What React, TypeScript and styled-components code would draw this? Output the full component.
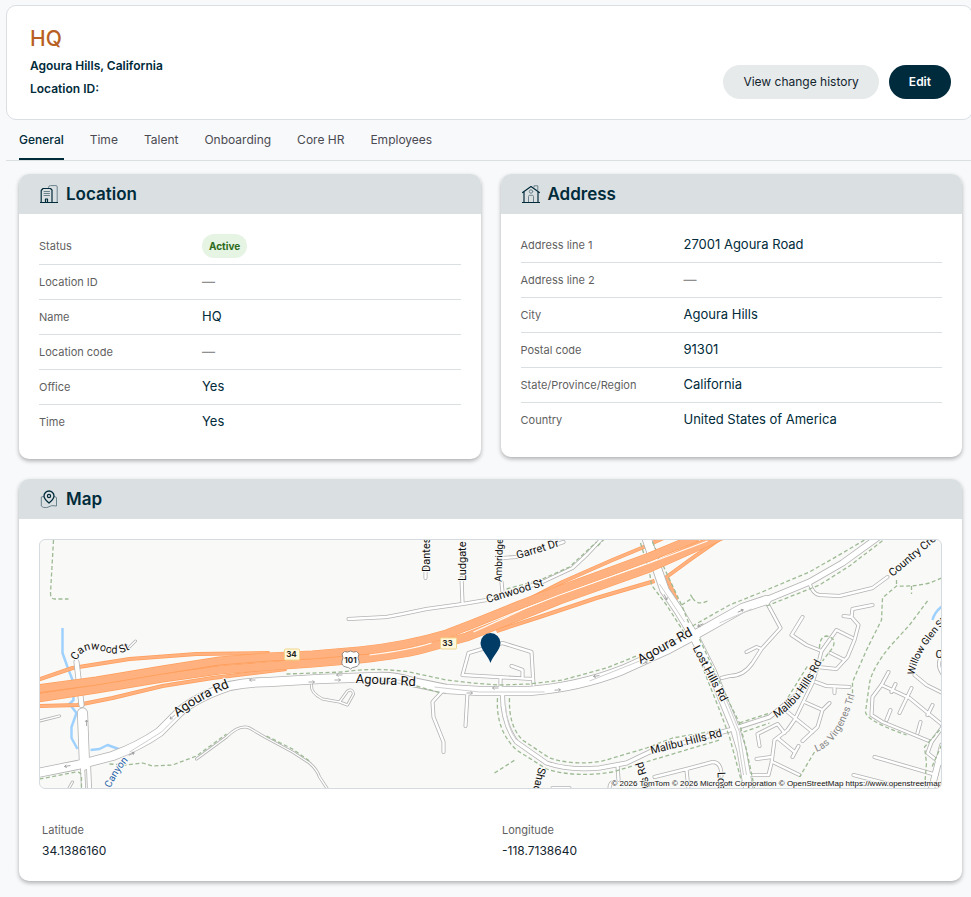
import React, { useState } from "react";
import styled, { createGlobalStyle, css } from "styled-components";

const GlobalStyle = createGlobalStyle`
  * { box-sizing: border-box; }
  body {
    margin: 0;
    background: #f8f9fb;
    color: #002b3a;
    font-family: Inter, "Liberation Sans", sans-serif;
    font-size: 12px;
    overflow-x: hidden;
  }
  h1, h2, p, dl, dd { margin: 0; }
`;

const Page = styled.div`
  padding: 5px 0 16px 6px;
`;

const HeaderCard = styled.header`
  display: flex;
  justify-content: space-between;
  align-items: flex-end;
  margin-right: -2px;
  padding: 20px 21px 19px 23px;
  background: #fff;
  border: 1px solid #dadfe4;
  border-radius: 10px;
`;

const Title = styled.h1`
  margin-bottom: 2px;
  color: #b85f24;
  font-size: 21px;
  font-weight: 500;
  line-height: 26px;
`;

const HeaderLine = styled.p`
  font-size: 12px;
  font-weight: 600;
  line-height: 23px;
`;

const Actions = styled.div`
  display: flex;
  gap: 10px;
  padding-bottom: 1px;
`;

const PillButton = styled.button<{ $primary?: boolean }>`
  height: 34px;
  padding: 0 20px;
  border: 0;
  border-radius: 17px;
  background: ${(p) => (p.$primary ? "#002b3d" : "#e6eaeb")};
  color: ${(p) => (p.$primary ? "#fff" : "#12242e")};
  font: ${(p) => (p.$primary ? 600 : 400)} 12px/18px Inter, sans-serif;
  cursor: pointer;
`;

const TabBar = styled.div`
  display: flex;
  gap: 26px;
  padding-left: 13px;
  border-bottom: 1px solid #dadfe2;
`;

const Tab = styled.button<{ $active: boolean }>`
  height: 40px;
  padding: 2px 0 0;
  border: 0;
  border-bottom: 2px solid transparent;
  background: none;
  color: #4a4a52;
  font: 400 12px/18px Inter, sans-serif;
  cursor: pointer;
  ${(p) =>
    p.$active &&
    css`
      color: #002b3a;
      font-weight: 500;
      border-bottom-color: #002b3a;
    `}
`;

const Content = styled.main`
  display: grid;
  grid-template-columns: repeat(2, minmax(0, 1fr));
  align-items: start;
  gap: 20px;
  padding: 13px 9px 0 13px;
`;

const Card = styled.section<{ $wide?: boolean }>`
  grid-column: ${(p) => (p.$wide ? "1 / -1" : "auto")};
  overflow: hidden;
  background: #fff;
  border-radius: 10px;
  box-shadow: 0 2px 4px rgba(0, 0, 0, 0.3);
`;

const CardHeader = styled.div`
  display: flex;
  align-items: center;
  gap: 8px;
  height: 40px;
  padding: 0 21px;
  background: #dadfe2;
`;

const CardTitle = styled.h2`
  font-size: 17px;
  font-weight: 600;
  line-height: 24px;
`;

const Fields = styled.dl`
  padding: 14px 20px 20px;
`;

const FieldRow = styled.div`
  display: grid;
  grid-template-columns: 163px minmax(0, 1fr);
  align-items: baseline;
  padding: 6px 0 8px;
  border-bottom: 1px solid #dadfe2;
  &:last-child { border-bottom: 0; }
`;

const BadgeRow = styled(FieldRow)`
  padding: 6px 0;
`;

const FieldLabel = styled.dt`
  color: #5f5f5f;
  font-size: 11px;
  line-height: 16px;
`;

const FieldValue = styled.dd<{ $empty?: boolean }>`
  color: ${(p) => (p.$empty ? "#8f8f8f" : "#002b3a")};
  font-size: 13px;
  font-weight: ${(p) => (p.$empty ? 600 : 400)};
  line-height: 20px;
`;

const BadgeValue = styled.dd`
  display: flex;
`;

const Badge = styled.span`
  padding: 0 7px;
  border-radius: 12px;
  background: #e6f4e4;
  color: #2d6a20;
  font-size: 10px;
  font-weight: 700;
  line-height: 24px;
`;

const MapBody = styled.div`
  padding: 20px 20px 20px;
`;

const MapFrame = styled.div`
  height: 250px;
  overflow: hidden;
  border: 1px solid #d5dce1;
  border-radius: 6px;
  background: #f9f9f7;
`;

const MapDrawing = styled.svg`
  display: block;
  width: 100%;
  height: 100%;
  font-family: Roboto, sans-serif;
  fill: none;
  stroke-linejoin: round;
`;

const Coordinates = styled.dl`
  display: grid;
  grid-template-columns: repeat(2, minmax(0, 1fr));
  gap: 20px;
  padding: 31px 0 0 3px;
`;

const CoordinateLabel = styled.dt`
  color: #5f5f5f;
  font-size: 11px;
  line-height: 20px;
`;

const CoordinateValue = styled.dd`
  color: #12242e;
  font-size: 12px;
  line-height: 21px;
`;

const IconSvg = styled.svg`
  width: 18px;
  height: 18px;
  flex: none;
  fill: none;
  stroke: #002b3a;
  stroke-width: 1.2;
  stroke-linecap: round;
  stroke-linejoin: round;
`;

const soft = "#6b838d";

const BuildingIcon = () => (
  <IconSvg viewBox="0 0 18 18" aria-hidden="true">
    <path stroke={soft} d="M8.500 2.500 9 1.200 10.500.6H16Q17.200.6 17.200 1.800V17" strokeWidth="1" />
    <path d="M.5 17.500h17M1.200 17V5.500L3 3.500h7.500L12 5v12M5.500 17v-3h2v3" />
    <path stroke={soft} strokeWidth="1" d="M4 6.500h5.500M4 8.500h5.500M4 10.500h5.500" />
  </IconSvg>
);

const HouseIcon = () => (
  <IconSvg viewBox="0 0 18 18" aria-hidden="true">
    <path stroke={soft} strokeWidth="1" d="M12 2V.8h3.800V5M6.500 17v-5.500q0-1.200 1.200-1.200h2.600q1.200 0 1.200 1.200V17" />
    <circle stroke={soft} strokeWidth="1" cx="9" cy="6.500" r="1.700" />
    <path d="M.6 7.500 9 1.500l8.400 6M2 7v10.500M16 7v10.500M.5 17.500h17" />
  </IconSvg>
);

const MapIcon = () => (
  <IconSvg viewBox="0 0 18 18" aria-hidden="true">
    <path stroke={soft} strokeWidth="1" d="M3.500 6.500 1.300 7v9l2 1.400 3.500.2 5-2 4.700.4V7.500L14.500 6.500" />
    <path d="M9 13c-1-1.200-5-3.500-5-7a5 5 0 0 1 10 0c0 3.500-4 5.800-5 7Z" strokeWidth="1.300" />
    <circle cx="9" cy="6" r="1.600" />
  </IconSvg>
);

type Road = { d: string; w: number };

const roads: Road[] = [
  { w: 3, d: "M90 107 96 101M0 181 20 176M29 249 33 242" },
  { w: 3, d: "M157 219 187 197Q200 184 210 188L227 198 253 212 270 223Q278 230 280 237L288 249" },
  { w: 4, d: "M386 30V38M422 38 423 63M462 42 463 52M463 18 477 17M518 4 524 2" },
  { w: 4, d: "M309 79 347 77 363 74 387 69 423 64 447 60 503 42 533 28 548 14 563 -2" },
  { w: 3, d: "M272 145Q271 153 283 159L300 162 308 151Q313 148 314 154L308 165 300 162" },
  { w: 4, d: "M403 151 393 162 394 177 404 202V212M428 153 426 186" },
  { w: 4, d: "M423 135 429 113 463 103 492 112 494 145M423 135 493 139M461 138V150M472 126 483 130V138" },
  { w: 5, d: "M463 155Q463 183 477 202L507 223Q530 231 560 228L587 223 610 212 650 201 690 190 730 177 757 155 777 127" },
  { w: 4, d: "M578 225 579 240M570 249Q570 241 575 243M615 237 647 229 673 222Q682 222 682 236M647 230 649 249M513 248 530 248" },
  { w: 4, d: "M770 43Q773 54 780 55L800 56 833 48 848 37" },
  { w: 4, d: "M727 62 741 88 722 109 713 123Q704 136 690 136L682 138M707 112 717 107 722 109M763 77 752 95 767 105 782 111" },
  { w: 4, d: "M833 65 813 69 812 77 804 76M812 77 819 85 815 100 808 117 797 129 778 127 773 143 755 180 748 190 735 200 732 223 729 235 705 235" },
  { w: 4, d: "M778 127 782 111 797 90 813 98M791 113 805 120M776 142 787 146 810 147M795 147V153" },
  { w: 4, d: "M765 162 783 170 790 163M783 170 778 187 763 201M748 172 773 192M720 206 718 194 738 184 745 193" },
  { w: 4, d: "M738 198 755 212M759 206 753 217M717 219 732 217M733 222 760 235" },
  { w: 4, d: "M875 135 887 145 903 153M903 115Q896 124 903 134M849 132 842 145 833 157 832 175 843 182 892 202 903 187" },
  { w: 4, d: "M842 145 870 158 903 185M856 144 852 152M872 148 860 173M893 165 888 175M851 170 847 180M881 182 878 193" },
  { w: 4, d: "M892 202 888 213 903 225M835 217 897 235M814 235 853 245" },
  { w: 7, d: "M903 206 892 249" },
  { w: 6, d: "M37 122 40 147 42 165" },
  { w: 11, d: "M43 173 45 225" },
  { w: 5, d: "M43 225 44 249M49 225 50 249" },
  { w: 10, d: "M607 -2 617 27 625 50 640 72 655 97 673 133 685 163 695 187 702 210 709 250" },
  { w: 10, d: "M-2 233 38 225 73 216Q100 206 120 192L140 172Q155 158 190 146 210 142 230 142L280 139 337 137Q355 136 373 142L407 149 440 151H490Q540 147 583 130L627 110 655 95 703 68 727 60" },
  { w: 7, d: "M724 61 770 42 803 23 839 -3" },
];

const paths = [
  "M14 0 11 53Q11 59 15 59H29",
  "M70 224 87 225 103 223 113 226 133 225 157 216 187 194M0 239 37 232Q42 232 42 237V248",
  "M227 196 253 209 270 221M377 146 402 153",
  "M247 134 303 132Q335 127 370 132L407 140 433 143 460 145 490 144 523 140 567 128 597 116",
  "M503 39 530 27 557 2M467 49 500 40M558 6 564 0",
  "M458 158Q456 190 477 210L507 229Q535 238 573 232L613 220 680 200",
  "M470 158Q469 186 483 200L510 218Q535 226 563 221L607 208 633 198 680 190M455 233 477 219",
  "M601 3 610 32 612 45 627 65 645 93M657 112 680 170 690 197 703 245",
  "M613 2 627 33 643 67 650 85M660 99 687 157 700 183 707 210 715 248",
  "M642 65 653 58 650 53M653 58Q658 66 668 61",
  "M653 86 690 65 720 53 770 32 803 13 825 0M727 66 780 45 810 26 844 0",
  "M700 183 730 173M704 192 730 183M745 163 768 126",
  "M780 108Q780 97 787 96 798 98 793 108L783 121",
  "M902 38 890 43Q873 47 857 46L843 58 842 80 827 110 813 142V158M775 212 760 237M857 40V46M872 46V54",
  "M888 61 870 85 850 107Q833 128 830 143L826 172Q827 181 867 195",
  "M900 190 885 207 887 223 885 248M902 205 892 228",
];

const ramps = [
  "M-2 140 33 128 90 119 157 114 230 113",
  "M-2 166 38 165 73 158 123 146 173 138 247 129",
  "M480 64 523 42 573 20 602 8 624 -2",
  "M457 91 500 77 557 58 615 41",
  "M637 60 627 37 653 18 680 -1",
];

const highways = [
  "M-2 149 57 141 123 130 180 121 230 117 273 115 320 111Q367 106 407 94L433 84 480 65 520 50 610 17 658 -3",
  "M-2 158 57 149 123 138 180 130 230 126 273 123 320 119Q367 114 387 108L427 97 493 71 520 60 610 28 684 -5",
];

const arrows: [number, number, number][] = [
  [28, 226, 170], [92, 214, -25], [133, 177, 140], [213, 140, 180], [272, 142, 0],
  [300, 135, 180], [298, 140, 0], [430, 153, 0], [456, 148, 180], [518, 150, -3],
  [557, 136, 170], [605, 123, -25], [661, 85, 155], [701, 71, -25], [47, 183, -90], [626, 57, 62],
];

const labels: { x: number; y: number; r: number; s: number; t: string }[] = [
  { x: 390, y: 32, r: -90, s: 11, t: "Dantes" },
  { x: 426, y: 41, r: -90, s: 11, t: "Ludgate" },
  { x: 462, y: 42, r: -88, s: 10, t: "Ambridge" },
  { x: 478, y: 19, r: -17, s: 11, t: "Garret Dr" },
  { x: 448, y: 63, r: -17, s: 11, t: "Canwood St" },
  { x: 316, y: 143, r: 3, s: 13, t: "Agoura Rd" },
  { x: 601, y: 124, r: -29, s: 13, t: "Agoura Rd" },
  { x: 653, y: 108, r: 62, s: 11, t: "Lost Hills Rd" },
  { x: 612, y: 214, r: -14, s: 11, t: "Malibu Hills Rd" },
  { x: 853, y: 37, r: -40, s: 11, t: "Country Creek" },
  { x: 499, y: 227, r: 103, s: 11, t: "Shadow" },
  { x: 614, y: 257, r: -107, s: 11, t: "Hills Rd" },
  { x: 678, y: 232, r: 88, s: 11, t: "Lost" },
  { x: 896, y: 118, r: 0, s: 11, t: "C" },
];

const curved = [
  { id: "canwood", s: 11, t: "Canwood St", c: "#111", d: "M37 121C44 106 56 109 66 112 78 116 86 112 99 105" },
  { id: "agoura", s: 13, t: "Agoura Rd", c: "#111", d: "M138 177Q162 158 196 145" },
  { id: "malibu", s: 11, t: "Malibu Hills Rd", c: "#111", d: "M737 178Q764 162 785 116" },
  { id: "virgenes", s: 10, t: "Las Virgenes Trl", c: "#858585", d: "M777 212Q802 203 816 152" },
  { id: "willow", s: 10, t: "Willow Glen St", c: "#111", d: "M875 135Q878 110 912 76" },
  { id: "canyon", s: 10, t: "Canyon", c: "#1d5fa9", d: "M71 248Q78 232 93 215" },
];

function AreaMap() {
  return (
    <MapDrawing viewBox="0 0 902 248" preserveAspectRatio="xMidYMid slice" role="img" aria-label="Map of Agoura Hills">
      <g stroke="#9fd1ff" strokeWidth="2.500">
        <path d="M23 88V113L28 127 33 140 34 160 30 164 37 173 32 187V198L38 209M51 210 60 209 68 205 82 210M893 80Q895 72 903 66" />
      </g>
      <g stroke="#ff9e5c">
        {ramps.map((d) => <path key={d} d={d} strokeWidth="4" />)}
      </g>
      <g stroke="#ffb27f">
        {ramps.map((d) => <path key={d} d={d} strokeWidth="2.500" />)}
      </g>
      <g stroke="#b3b3b3" strokeLinecap="round">
        {roads.map((r) => <path key={r.d} d={r.d} strokeWidth={r.w} />)}
      </g>
      <g stroke="#fff" strokeLinecap="round">
        {roads.map((r) => <path key={r.d} d={r.d} strokeWidth={r.w - 1.6} />)}
      </g>
      <g stroke="#9dba94" strokeWidth="1.300" strokeDasharray="4 2.500">
        {paths.map((d) => <path key={d} d={d} />)}
      </g>
      <g stroke="#cfcfcf" strokeWidth="1">
        <path d="M90 212 122 192 137 177M337 137 373 142M395 147 440 152M440 152H505M550 141 600 121M680 83 712 69M466 165Q467 187 477 200M684 160 697 192 704 235M687 160 700 192 707 235M620 44 632 62 645 82" />
      </g>
      <g stroke="#ff9e5c">
        {highways.map((d) => <path key={d} d={d} strokeWidth="9" />)}
      </g>
      <g stroke="#ffb27f">
        {highways.map((d) => <path key={d} d={d} strokeWidth="7.800" />)}
      </g>
      <path stroke="#ff9e5c" strokeWidth=".8" d="M-2 153 57 145 123 134 180 125 230 121 273 119 330 114" />
      <path stroke="#fffaf6" strokeWidth="1.200" d="M434 92 487 68 520 55 565 39 610 23 668 1M330 115Q370 110 392 103" />
      <g stroke="#999" strokeWidth=".8">
        {arrows.map(([x, y, r]) => (
          <path key={`${x}-${y}`} transform={`translate(${x} ${y}) rotate(${r})`} d="M-3 0H3M1-1.500 3 0 1 1.500" />
        ))}
      </g>
      <g fill="#111" stroke="#f9f9f7" strokeWidth="2" paintOrder="stroke">
        {labels.map((l) => (
          <text key={`${l.t}-${l.x}`} fontSize={l.s} transform={`translate(${l.x} ${l.y}) rotate(${l.r})`}>{l.t}</text>
        ))}
        {curved.map((c) => (
          <React.Fragment key={c.id}>
            <path id={c.id} d={c.d} fill="none" stroke="none" />
            <text fontSize={c.s} fill={c.c}><textPath href={`#${c.id}`}>{c.t}</textPath></text>
          </React.Fragment>
        ))}
      </g>
      <g fill="#fff8dc" stroke="#efd78d">
        <rect x="245" y="109" width="15" height="11" rx="1" />
        <rect x="401" y="98" width="16" height="11" rx="1" />
      </g>
      <path
        fill="#fff"
        stroke="#777"
        strokeWidth=".8"
        d="M305 111.500q3 1.500 6-.5 3 2 6 .5l2.500 2.500q-2 4 0 7 1 5-4 6-3 .3-4.500 2-1.500-1.700-4.500-2-5-1-4-6 2-3 0-7Z"
      />
      <g fill="#222" fontSize="8" fontWeight="700" textAnchor="middle" fontFamily="Inter, sans-serif">
        <text x="252" y="117">34</text>
        <text x="408" y="106">33</text>
        <text x="311" y="123">101</text>
      </g>
      <path fill="#003c66" d="M451 123C449 116 441 110 441 103a10 10 0 0 1 20 0C461 110 453 116 451 123Z" />
      <text x="572" y="246" fill="#111" stroke="#f9f9f7" strokeWidth="1.500" paintOrder="stroke" fontFamily="Liberation Sans, sans-serif" fontSize="8">
        © 2026 TomTom © 2026 Microsoft Corporation © OpenStreetMap https://www.openstreetmap.org
      </text>
    </MapDrawing>
  );
}

function Field({ label, value }: { label: string; value?: string }) {
  return (
    <FieldRow>
      <FieldLabel>{label}</FieldLabel>
      <FieldValue $empty={!value}>{value ?? "—"}</FieldValue>
    </FieldRow>
  );
}

const tabs = ["General", "Time", "Talent", "Onboarding", "Core HR", "Employees"];

export default function App() {
  const [active, setActive] = useState("General");
  return (
    <>
      <GlobalStyle />
      <Page>
        <HeaderCard>
          <div>
            <Title>HQ</Title>
            <HeaderLine>Agoura Hills, California</HeaderLine>
            <HeaderLine>Location ID:</HeaderLine>
          </div>
          <Actions>
            <PillButton type="button">View change history</PillButton>
            <PillButton type="button" $primary>Edit</PillButton>
          </Actions>
        </HeaderCard>
        <TabBar role="tablist">
          {tabs.map((t) => (
            <Tab key={t} type="button" role="tab" aria-selected={t === active} $active={t === active} onClick={() => setActive(t)}>
              {t}
            </Tab>
          ))}
        </TabBar>
        <Content>
          <Card>
            <CardHeader><BuildingIcon /><CardTitle>Location</CardTitle></CardHeader>
            <Fields>
              <BadgeRow>
                <FieldLabel>Status</FieldLabel>
                <BadgeValue><Badge>Active</Badge></BadgeValue>
              </BadgeRow>
              <Field label="Location ID" />
              <Field label="Name" value="HQ" />
              <Field label="Location code" />
              <Field label="Office" value="Yes" />
              <Field label="Time" value="Yes" />
            </Fields>
          </Card>
          <Card>
            <CardHeader><HouseIcon /><CardTitle>Address</CardTitle></CardHeader>
            <Fields>
              <Field label="Address line 1" value="27001 Agoura Road" />
              <Field label="Address line 2" />
              <Field label="City" value="Agoura Hills" />
              <Field label="Postal code" value="91301" />
              <Field label="State/Province/Region" value="California" />
              <Field label="Country" value="United States of America" />
            </Fields>
          </Card>
          <Card $wide>
            <CardHeader><MapIcon /><CardTitle>Map</CardTitle></CardHeader>
            <MapBody>
              <MapFrame><AreaMap /></MapFrame>
              <Coordinates>
                <div>
                  <CoordinateLabel>Latitude</CoordinateLabel>
                  <CoordinateValue>34.1386160</CoordinateValue>
                </div>
                <div>
                  <CoordinateLabel>Longitude</CoordinateLabel>
                  <CoordinateValue>-118.7138640</CoordinateValue>
                </div>
              </Coordinates>
            </MapBody>
          </Card>
        </Content>
      </Page>
    </>
  );
}
